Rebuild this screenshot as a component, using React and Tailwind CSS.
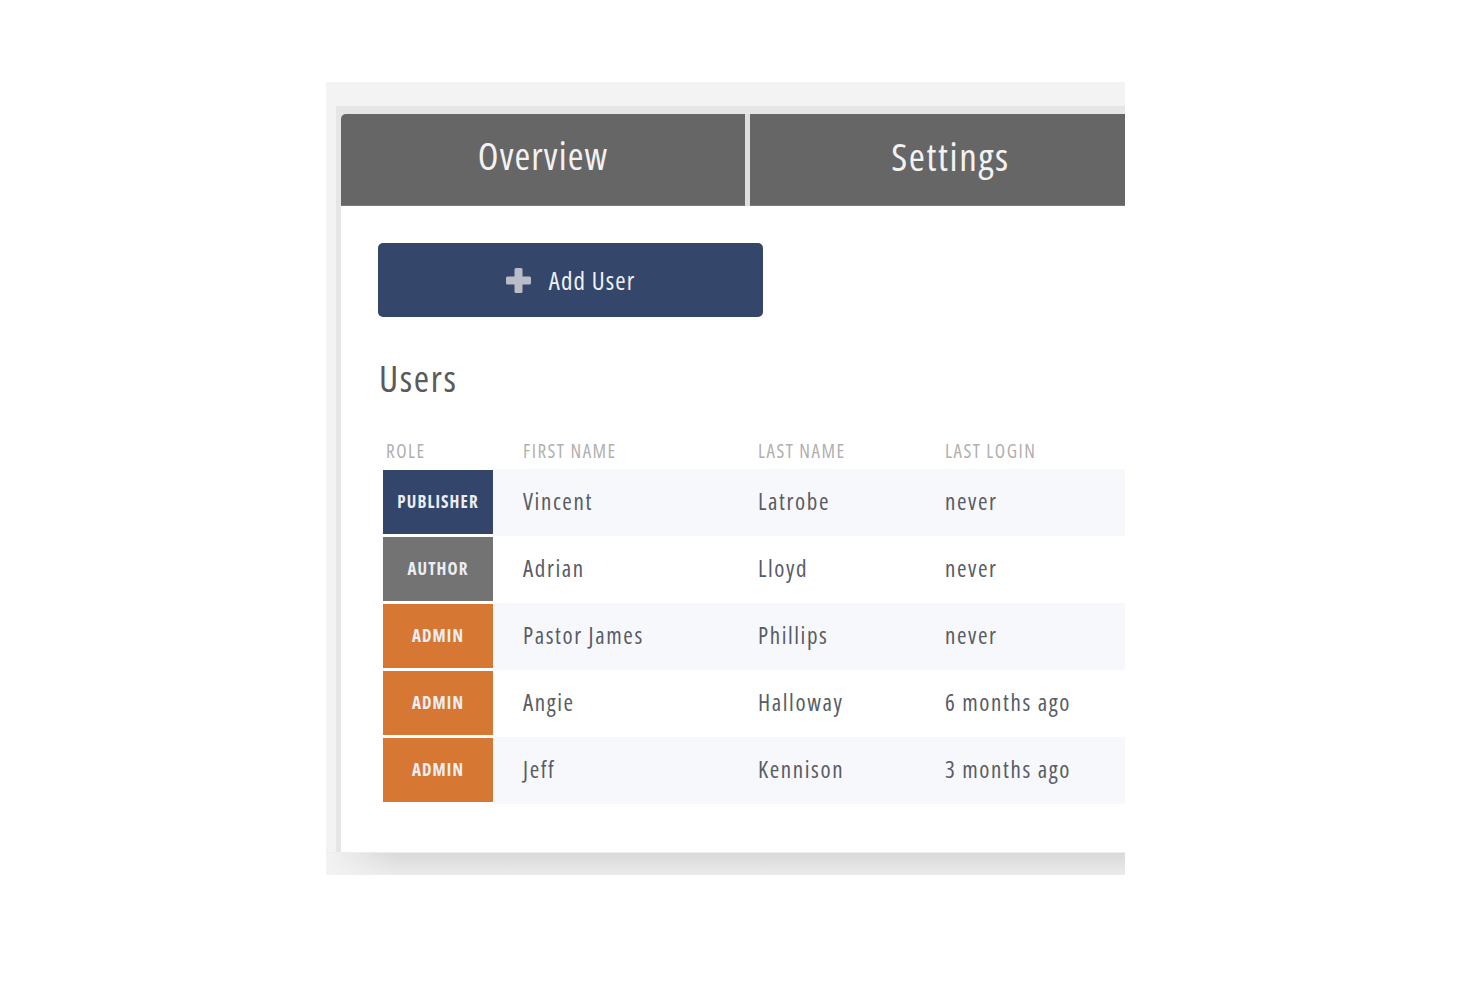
import React from "react";

const FONT = { fontFamily: '"Open Sans", "DejaVu Sans Condensed", sans-serif', fontStretch: "75%" };

const users = [
  { role: "PUBLISHER", first: "Vincent", last: "Latrobe", login: "never" },
  { role: "AUTHOR", first: "Adrian", last: "Lloyd", login: "never" },
  { role: "ADMIN", first: "Pastor James", last: "Phillips", login: "never" },
  { role: "ADMIN", first: "Angie", last: "Halloway", login: "6 months ago" },
  { role: "ADMIN", first: "Jeff", last: "Kennison", login: "3 months ago" },
];

const roleBg = {
  PUBLISHER: "bg-[#33456a]",
  AUTHOR: "bg-[#737373]",
  ADMIN: "bg-[#d67834]",
};

function PlusIcon() {
  return (
    <svg width="25" height="25" viewBox="0 0 25 25" fill="#b9bdc8">
      <rect x="8.5" y="0" width="8" height="25" rx="1.5" />
      <rect x="0" y="8.5" width="25" height="8" rx="1.5" />
    </svg>
  );
}

export default function App() {
  return (
    <div className="min-h-screen bg-white pt-[82px] pl-[326px]" style={FONT}>
      <div className="w-[799px] h-[793px] bg-[#f3f3f3] overflow-hidden flex flex-col pt-[24px]">
        <div className="flex-1 ml-[10px] bg-[#e6e6e6] pt-[8px] pl-[5px] flex flex-col">
          <div className="flex-1 bg-white flex flex-col">
            {/* Tabs */}
            <div className="flex h-[92px] bg-[#dedede]">
              <div className="w-[404px] bg-[#666666] rounded-tl-[5px] flex items-center justify-center border-b border-[#7a7a7a]">
                <span className="text-[38px] leading-none tracking-[1.1px] text-[#f2f2f2] -mt-[9px]">Overview</span>
              </div>
              <div className="w-[5px]" />
              <div className="flex-1 bg-[#666666] flex items-center justify-center border-b border-[#7a7a7a]">
                <span className="text-[39px] leading-none tracking-[1.6px] text-[#f2f2f2] -mt-[9px] translate-x-[13px]">Settings</span>
              </div>
            </div>

            {/* Content */}
            <div className="pt-[37px] pl-[37px]">
              <button className="w-[385px] h-[74px] rounded-[5px] bg-[#34466a] flex items-center justify-center gap-[18px]">
                <PlusIcon />
                <span className="text-[25px] leading-none tracking-[1.1px] text-[#eef0f5]">Add User</span>
              </button>

              <h2 className="mt-[42px] ml-[1px] text-[37px] leading-none tracking-[1.6px] text-[#5a5a5a]">Users</h2>

              <div className="mt-[37px] ml-[5px]">
                <div className="flex h-[36px] items-center text-[19px] tracking-[1.5px] text-[#b0b0b0]">
                  <div className="w-[110px] pl-[3px]">ROLE</div>
                  <div className="w-[265px] pl-[30px]">FIRST NAME</div>
                  <div className="w-[187px]">LAST NAME</div>
                  <div className="flex-1">LAST LOGIN</div>
                </div>
                {users.map((u, i) => (
                  <div
                    key={i}
                    className={`flex h-[67px] items-stretch text-[23px] tracking-[1.6px] text-[#585c66] ${i % 2 === 0 ? "bg-[#f7f8fc]" : "bg-white"}`}
                  >
                    <div className={`w-[110px] border-t border-b-2 border-white ${roleBg[u.role]} flex items-center justify-center`}>
                      <span className="text-[17px] font-bold tracking-[1.1px] text-[#eceef3]">{u.role}</span>
                    </div>
                    <div className="w-[265px] pl-[30px] flex items-center -mt-[2px]">{u.first}</div>
                    <div className="w-[187px] flex items-center -mt-[2px]">{u.last}</div>
                    <div className="flex-1 flex items-center -mt-[2px]">{u.login}</div>
                  </div>
                ))}
              </div>
            </div>
          </div>
        </div>
        <div className="h-[23px] border-t border-[#ededed] bg-[linear-gradient(to_right,#f3f3f3,rgba(243,243,243,0)_70px),linear-gradient(to_bottom,#d9d9d9,#ebebeb)]" />
      </div>
    </div>
  );
}
